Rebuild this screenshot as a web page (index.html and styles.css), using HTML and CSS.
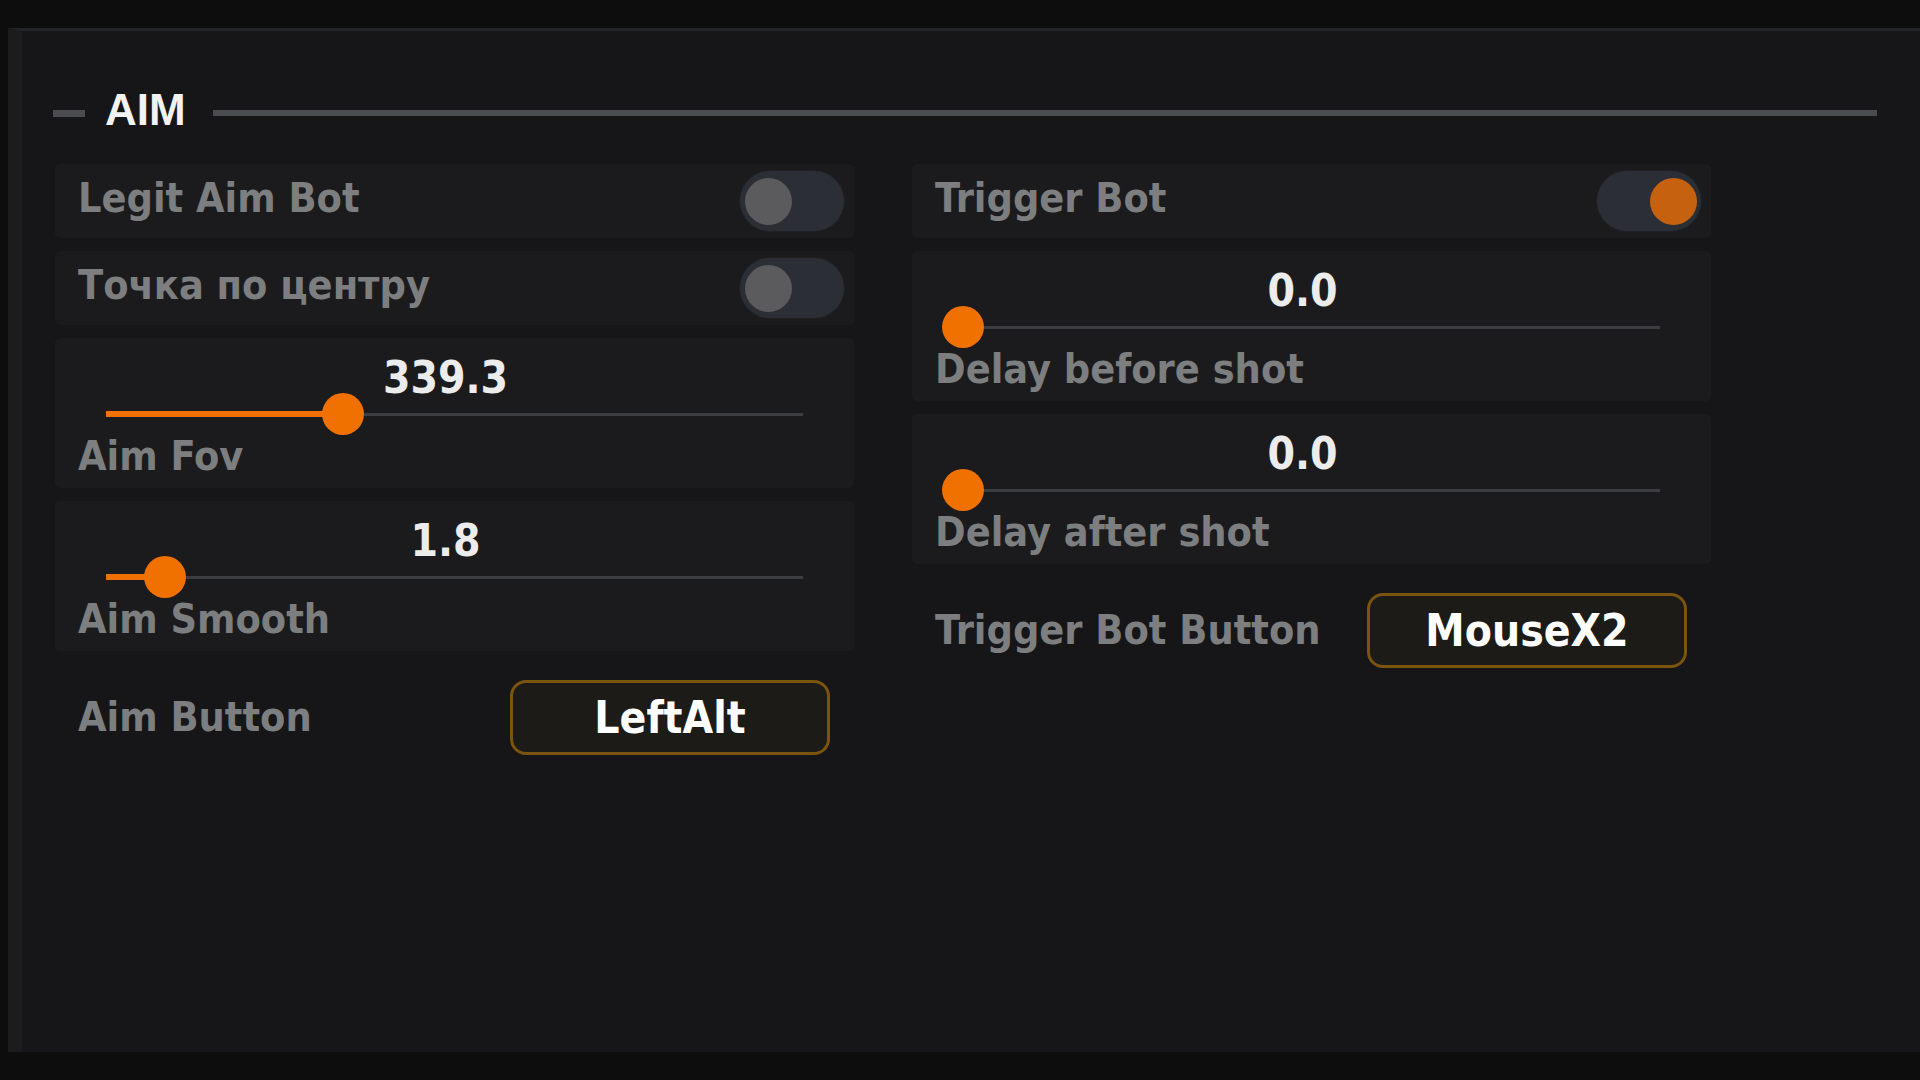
FILE: index.html
```
<!DOCTYPE html>
<html lang="en">
<head>
  <meta charset="UTF-8">
  <title>AIM settings</title>
  <link rel="stylesheet" href="styles.css">
</head>
<body>

<div class="window">
  <div class="section-title">
    <span class="dash"></span>
    <span class="title">AIM</span>
    <span class="rule"></span>
  </div>

  <div class="columns">
    <div class="column">
      <div class="item toggle-row">
        <span class="label">Legit Aim Bot</span>
        <span class="switch"><span class="knob"></span></span>
      </div>
      <div class="item toggle-row">
        <span class="label">Точка по центру</span>
        <span class="switch"><span class="knob"></span></span>
      </div>
      <div class="item slider-row">
        <div class="value">339.3</div>
        <div class="track">
          <div class="fill" style="width: 34%"></div>
          <div class="grab" style="left: 34%"></div>
        </div>
        <div class="label">Aim Fov</div>
      </div>
      <div class="item slider-row">
        <div class="value">1.8</div>
        <div class="track">
          <div class="fill" style="width: 8.5%"></div>
          <div class="grab" style="left: 8.5%"></div>
        </div>
        <div class="label">Aim Smooth</div>
      </div>
      <div class="key-row">
        <span class="label">Aim Button</span>
        <span class="key">LeftAlt</span>
      </div>
    </div>

    <div class="column">
      <div class="item toggle-row">
        <span class="label">Trigger Bot</span>
        <span class="switch on"><span class="knob"></span></span>
      </div>
      <div class="item slider-row">
        <div class="value">0.0</div>
        <div class="track">
          <div class="fill" style="width: 0%"></div>
          <div class="grab" style="left: 0%"></div>
        </div>
        <div class="label">Delay before shot</div>
      </div>
      <div class="item slider-row">
        <div class="value">0.0</div>
        <div class="track">
          <div class="fill" style="width: 0%"></div>
          <div class="grab" style="left: 0%"></div>
        </div>
        <div class="label">Delay after shot</div>
      </div>
      <div class="key-row">
        <span class="label">Trigger Bot Button</span>
        <span class="key">MouseX2</span>
      </div>
    </div>
  </div>
</div>

</body>
</html>
```

FILE: styles.css
```
html, body {
  margin: 0;
  height: 100%;
  overflow: hidden;
}
body {
  background: #0d0d0e;
  font-family: "DejaVu Sans Condensed", "DejaVu Sans", Verdana, sans-serif;
  font-stretch: condensed;
  font-weight: bold;
}

.window {
  box-sizing: border-box;
  height: 1024px;
  margin-top: 28px;
  margin-left: 8px;
  padding: 57px 43px 0 31px;
  background: #161618;
  border-top: 3px solid #232426;
  border-left: 14px solid #1b1c1e;
}

/* section heading */
.section-title {
  display: flex;
  align-items: center;
  height: 44px;
}
.dash {
  width: 32px;
  height: 7px;
  margin-top: 6px;
  background: #4b4c4f;
}
.title {
  margin: 0 27px 0 20px;
  font-family: "Liberation Sans", Arial, sans-serif;
  font-stretch: normal;
  font-weight: bold;
  font-size: 44px;
  line-height: 44px;
  color: #f2f2f2;
}
.rule {
  flex: 1;
  height: 6px;
  margin-top: 6px;
  background: #4b4c4f;
}

/* two columns of controls */
.columns {
  display: grid;
  grid-template-columns: 799px 799px;
  column-gap: 58px;
  margin-top: 32px;
  margin-left: 2px;
}
.column {
  display: flex;
  flex-direction: column;
  gap: 13px;
}
.item {
  box-sizing: border-box;
  background: #1b1b1d;
  border-radius: 5px;
}
.label {
  font-size: 41px;
  line-height: 41px;
  color: #7d7e80;
  white-space: nowrap;
}

/* toggles */
.toggle-row {
  display: flex;
  align-items: center;
  justify-content: space-between;
  height: 74px;
  padding: 0 10px 0 23px;
}
.toggle-row .label {
  padding-bottom: 6px;
}
.switch {
  display: flex;
  align-items: center;
  box-sizing: border-box;
  width: 104px;
  height: 60px;
  padding: 0 5px;
  border-radius: 30px;
  background: #2b2f35;
  box-shadow: 0 0 0 1px #1e2024;
}
.switch .knob {
  width: 47px;
  height: 47px;
  border-radius: 50%;
  background: #5b5b5d;
}
.switch.on {
  justify-content: flex-end;
  padding-right: 4px;
}
.switch.on .knob {
  background: #c6620f;
}

/* sliders */
.slider-row {
  height: 150px;
  padding: 22px 23px 0 23px;
}
.value {
  padding-right: 18px;
  text-align: center;
  font-size: 44px;
  line-height: 36px;
  color: #ececec;
}
.track {
  position: relative;
  height: 36px;
  margin: 0 28px;
}
.track::before {
  content: "";
  position: absolute;
  left: 0;
  right: 0;
  top: 17px;
  height: 3px;
  background: #3c3d40;
}
.fill {
  position: absolute;
  left: 0;
  top: 15px;
  height: 6px;
  background: #f07000;
}
.grab {
  position: absolute;
  top: 18px;
  width: 42px;
  height: 42px;
  margin: -21px 0 0 -21px;
  border-radius: 50%;
  background: #f07000;
}
.slider-row .label {
  margin-top: 6px;
  line-height: 36px;
}

/* key binding buttons */
.key-row {
  display: flex;
  align-items: center;
  margin-top: 16px;
  padding-left: 23px;
}
.key-row .label {
  width: 432px;
}
.key {
  box-sizing: border-box;
  width: 320px;
  height: 75px;
  border: 3px solid #7b540d;
  border-radius: 16px;
  background: #1c1b17;
  text-align: center;
  font-size: 44px;
  line-height: 69px;
  color: #ffffff;
}
```
